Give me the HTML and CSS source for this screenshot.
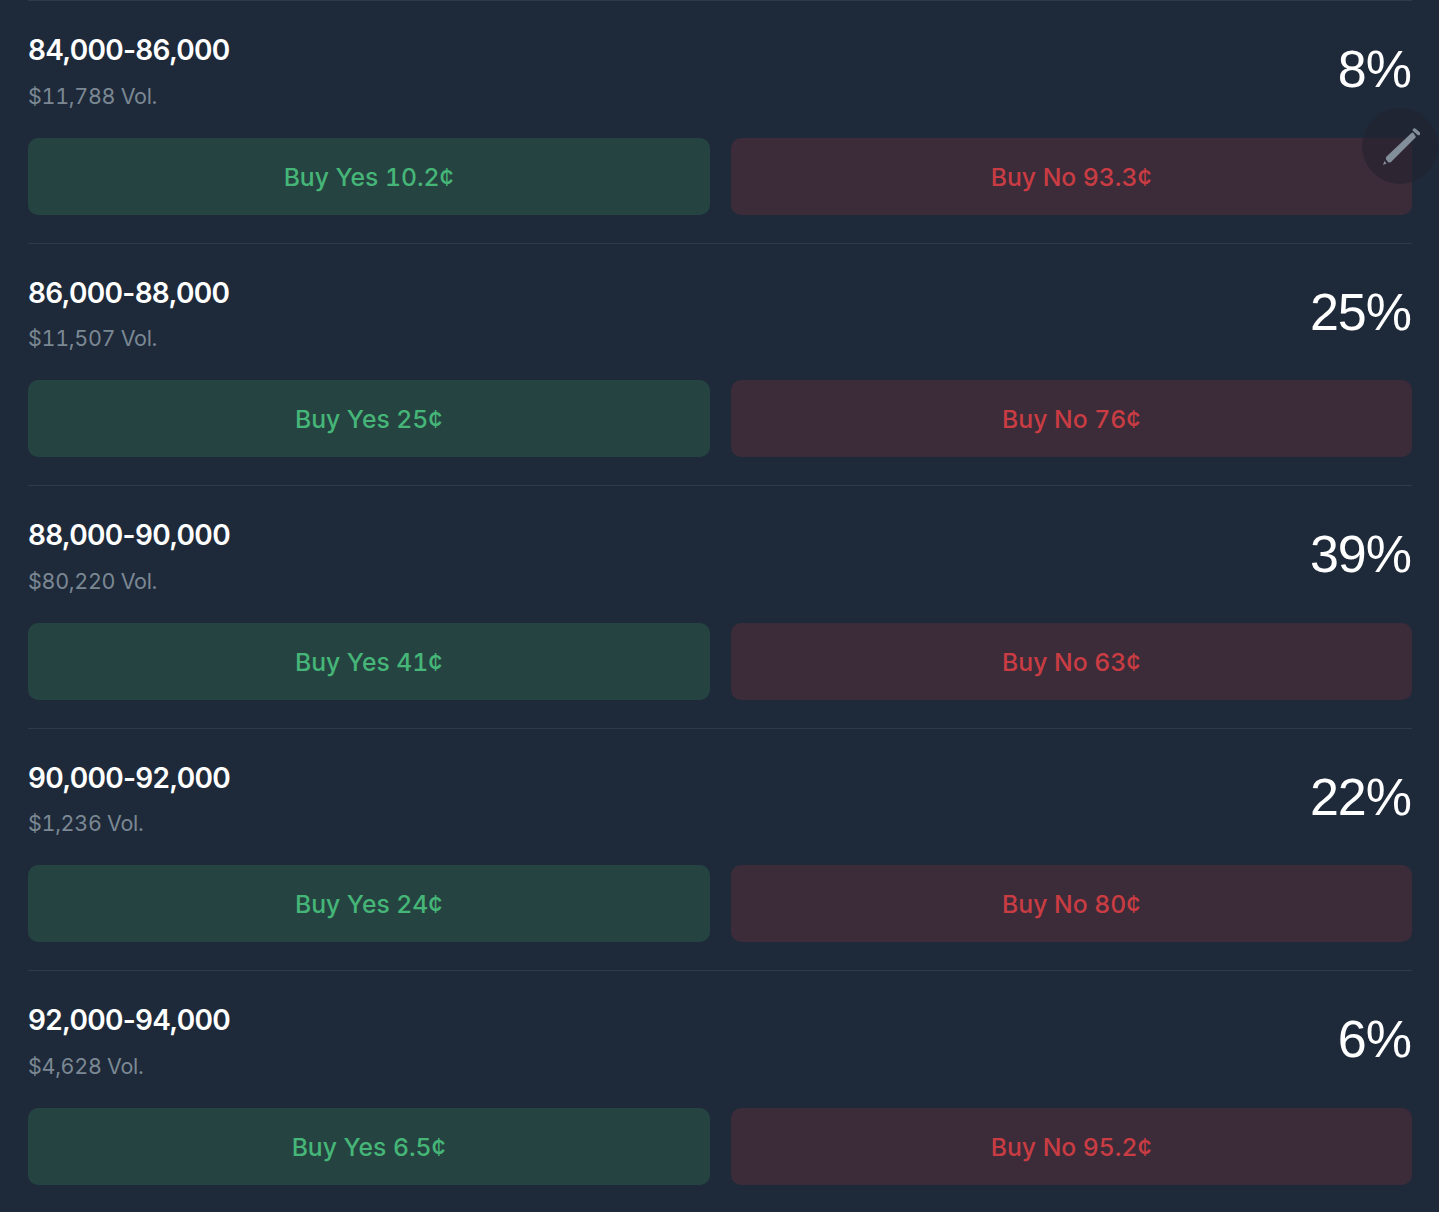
FILE: index.html
```html
<!DOCTYPE html>
<html lang="en">
<head>
    <meta charset="UTF-8">
    <meta name="viewport" content="width=device-width, initial-scale=1.0">
    <title>Market Outcomes</title>
    <link rel="stylesheet" href="styles.css">
</head>
<body>
    <div class="market-list">
        <div class="market-row">
            <div class="market-head">
                <div>
                    <div class="market-range">84,000-86,000</div>
                    <div class="market-vol">$11,788 Vol.</div>
                </div>
                <div class="market-pct">8%</div>
            </div>
            <div class="market-actions">
                <button class="buy-btn buy-yes">Buy Yes 10.2¢</button>
                <button class="buy-btn buy-no">Buy No 93.3¢</button>
            </div>
        </div>
        <div class="market-row">
            <div class="market-head">
                <div>
                    <div class="market-range">86,000-88,000</div>
                    <div class="market-vol">$11,507 Vol.</div>
                </div>
                <div class="market-pct">25%</div>
            </div>
            <div class="market-actions">
                <button class="buy-btn buy-yes">Buy Yes 25¢</button>
                <button class="buy-btn buy-no">Buy No 76¢</button>
            </div>
        </div>
        <div class="market-row">
            <div class="market-head">
                <div>
                    <div class="market-range">88,000-90,000</div>
                    <div class="market-vol">$80,220 Vol.</div>
                </div>
                <div class="market-pct">39%</div>
            </div>
            <div class="market-actions">
                <button class="buy-btn buy-yes">Buy Yes 41¢</button>
                <button class="buy-btn buy-no">Buy No 63¢</button>
            </div>
        </div>
        <div class="market-row">
            <div class="market-head">
                <div>
                    <div class="market-range">90,000-92,000</div>
                    <div class="market-vol">$1,236 Vol.</div>
                </div>
                <div class="market-pct">22%</div>
            </div>
            <div class="market-actions">
                <button class="buy-btn buy-yes">Buy Yes 24¢</button>
                <button class="buy-btn buy-no">Buy No 80¢</button>
            </div>
        </div>
        <div class="market-row">
            <div class="market-head">
                <div>
                    <div class="market-range">92,000-94,000</div>
                    <div class="market-vol">$4,628 Vol.</div>
                </div>
                <div class="market-pct">6%</div>
            </div>
            <div class="market-actions">
                <button class="buy-btn buy-yes">Buy Yes 6.5¢</button>
                <button class="buy-btn buy-no">Buy No 95.2¢</button>
            </div>
        </div>
    </div>

    <!-- Floating edit button -->
    <div class="edit-fab">
        <svg width="40" height="40" viewBox="0 0 40 40">
            <path class="pencil-body" d="M31.500 7 Q32.500 6 33.500 7 L35.500 10 Q36 11 35.500 11.500 L11 36 Q9.500 37 8 36 L6 33.500 Q5.500 31.500 6.500 30.500 Z"/>
            <path class="pencil-cap" d="M34.500 4 L38.500 7.500"/>
            <path class="pencil-tip" d="M4.500 35 L6.500 37.500 L3 39 Z"/>
        </svg>
    </div>
</body>
</html>
```

FILE: styles.css
```css
* {
    margin: 0;
    padding: 0;
    box-sizing: border-box;
}

body {
    font-family: 'Inter', 'Liberation Sans', sans-serif;
    background-color: #1e2a3a;
    height: 1212px;
    overflow: hidden;
}

.market-list {
    padding: 0 27px 0 28px;
}

.market-row {
    height: 242.5px;
    padding-top: 32px;
    border-top: 1px solid #2e3b4b;
}

.market-head {
    display: flex;
    justify-content: space-between;
    height: 104.9px;
}

.market-range {
    color: #ffffff;
    font-size: 28px;
    font-weight: 600;
    line-height: 34px;
    letter-spacing: -0.7px;
}

.market-vol {
    color: #7b8893;
    font-size: 21.5px;
    font-variant-numeric: tabular-nums;
    line-height: 28px;
    letter-spacing: -0.3px;
    margin-top: 14.9px;
}

.market-pct {
    color: #ffffff;
    font-family: 'Liberation Sans', sans-serif;
    font-size: 52px;
    line-height: 60px;
    letter-spacing: -1px;
    margin-top: 6px;
    padding-right: 1px;
}

.market-actions {
    display: grid;
    grid-template-columns: 1fr 1fr;
    gap: 21px;
}

.buy-btn {
    height: 77px;
    padding-top: 1px;
    border: none;
    border-radius: 10px;
    font-family: inherit;
    font-variant-numeric: tabular-nums;
    font-size: 24.7px;
    font-weight: 500;
    cursor: pointer;
}

.buy-yes {
    background-color: #254441;
    color: #46b678;
}

.buy-no {
    background-color: #3c2c39;
    color: #c93c43;
}

.edit-fab {
    position: absolute;
    left: 1362px;
    top: 108px;
    width: 76px;
    height: 76px;
    border-radius: 50%;
    background-color: rgba(35, 33, 45, 0.55);
    display: flex;
    align-items: center;
    justify-content: center;
}

.pencil-body,
.pencil-tip {
    fill: #838e9b;
}

.pencil-cap {
    fill: none;
    stroke: #838e9b;
    stroke-width: 3.5;
    stroke-linecap: round;
}
```
